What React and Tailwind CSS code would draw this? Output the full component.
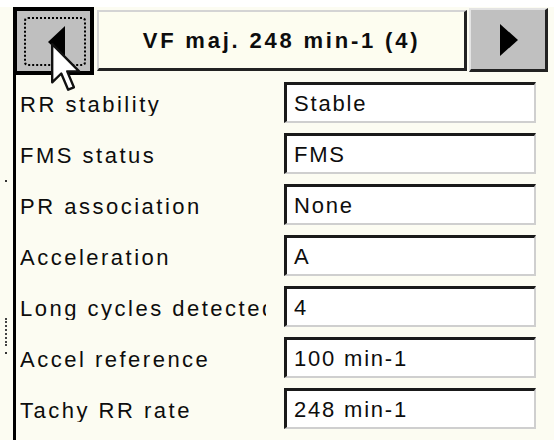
import React from "react";

// VF episode detail panel — header with prev/next, then read-only field rows

const rows = [
  { label: "RR stability", value: "Stable" },
  { label: "FMS status", value: "FMS" },
  { label: "PR association", value: "None" },
  { label: "Acceleration", value: "A" },
  { label: "Long cycles detected", value: "4" },
  { label: "Accel reference", value: "100 min-1" },
  { label: "Tachy RR rate", value: "248 min-1" },
];

const Cursor = () => (
  <svg
    className="absolute left-[51px] top-[42px]"
    width="31"
    height="52"
    viewBox="0 0 13 21"
  >
    <path
      d="M0.5 0.5 L0.5 16.5 L4.3 12.8 L7.2 19.6 L9.6 18.6 L6.8 11.9 L11.8 11.9 Z"
      fill="#fff"
      stroke="#111"
      strokeWidth="1"
      strokeLinejoin="round"
    />
  </svg>
);

const App = () => {
  return (
    <div
      className="relative w-[554px] h-[440px] overflow-hidden bg-[#fcfcf2] text-[#0d0d0d]"
      style={{ fontFamily: '"Liberation Sans", Arial, sans-serif' }}
    >
      <div className="h-[7px] bg-white" />

      {/* Header */}
      <div className="flex items-start pl-[13px]">
        <div className="relative w-[81px] h-[68px] border-[4px] border-black bg-[#bfbfbf] flex items-center justify-center">
          <div className="absolute left-[7px] right-[4px] top-[6px] bottom-[5px] border-2 border-dotted border-black rounded-[4px]" />
          <svg width="17" height="32" viewBox="0 0 17 32" className="ml-[6px] mt-[2px]">
            <path d="M17 0 L17 32 L0 16 Z" fill="#000" />
          </svg>
        </div>
        <div className="ml-[3px] mt-[3px] w-[370px] h-[61px] bg-[#fdfdf0] border-t-2 border-l-2 border-[#d4d4d4] border-r-[3px] border-b-[3px] border-r-[#222] border-b-[#222] flex items-center justify-center">
          <span className="text-[22px] font-bold tracking-[2.8px]">
            VF maj. 248 min-1 (4)
          </span>
        </div>
        <div className="ml-[2px] mt-[1px] w-[79px] h-[64px] bg-[#c0c0c0] border-t-2 border-l-2 border-[#e4e4e4] border-r-[3px] border-b-[3px] border-r-[#222] border-b-[#222] flex items-center justify-center">
          <svg width="18" height="32" viewBox="0 0 18 32" className="ml-[2px]">
            <path d="M0 0 L0 32 L18 16 Z" fill="#000" />
          </svg>
        </div>
      </div>

      {/* Body */}
      <div className="ml-[13px] border-l-[3px] border-black pl-[4px] pt-[7px] flex flex-col gap-[10px] h-[365px]">
        {rows.map((r) => (
          <div key={r.label} className="flex items-center">
            <div className="w-[246px] mr-[18px] overflow-hidden whitespace-nowrap text-[22px] tracking-[2.5px] leading-none pt-[4px]">
              {r.label}
            </div>
            <div className="w-[252px] h-[41px] bg-white border-t-[3px] border-l-[3px] border-[#1a1a1a] border-r-2 border-b-2 border-r-[#cfcfcf] border-b-[#cfcfcf] flex items-center pl-[7px] text-[22px] tracking-[1.8px]">
              {r.value}
            </div>
          </div>
        ))}
      </div>

      {/* stray grip dots on the left edge */}
      <div className="absolute left-[5px] top-[180px] w-[2px] h-[2px] bg-[#333]" />
      <div className="absolute left-[5px] top-[318px] w-[2px] h-[28px] border-l-2 border-dotted border-[#444]" />
      <div className="absolute left-[5px] top-[352px] w-[2px] h-[2px] bg-[#333]" />

      <Cursor />
    </div>
  );
};

export default App;
